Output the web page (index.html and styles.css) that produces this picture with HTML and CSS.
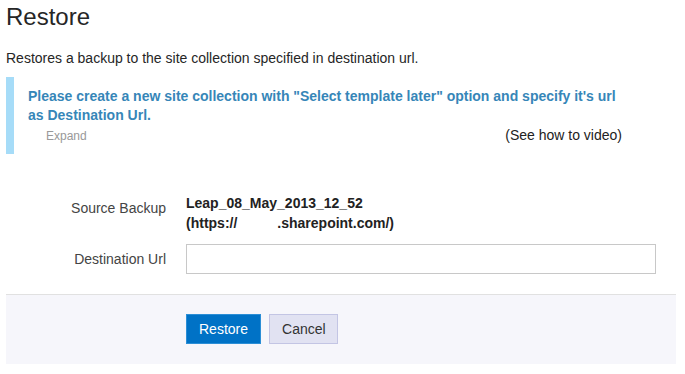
FILE: index.html
```html
<!DOCTYPE html>
<html lang="en">
<head>
  <meta charset="UTF-8" />
  <title>Restore</title>
  <link rel="stylesheet" href="styles.css">
</head>
<body>
  <div class="page">
    <h1>Restore</h1>
    <p class="intro">Restores a backup to the site collection specified in destination url.</p>

    <div class="callout">
      <div class="callout-text">Please create a new site collection with "Select template later" option and specify it's url as Destination Url.</div>
      <div class="callout-row">
        <a class="expand">Expand</a>
        <a class="video">(See how to video)</a>
      </div>
    </div>

    <div class="form-grid">
      <label class="src-label">Source Backup</label>
      <div class="value">Leap_08_May_2013_12_52<br>(https://<span class="blank"></span>.sharepoint.com/)</div>
      <label>Destination Url</label>
      <div><input type="text" id="destUrl" /></div>
    </div>

    <div class="actions">
      <button class="btn btn-primary">Restore</button>
      <button class="btn">Cancel</button>
    </div>
  </div>
</body>
</html>
```

FILE: styles.css
```css
body {
  font-family: 'Liberation Sans', Arial, sans-serif;
  margin: 0;
  background: #fff;
  color: #333;
}
.page {
  width: 670px;
  margin-left: 6px;
}
h1 {
  font-size: 24px;
  font-weight: normal;
  line-height: 28px;
  margin: 3px 0 0 0;
  color: #262626;
}
.intro {
  font-size: 14px;
  line-height: 20px;
  margin: 17px 0 0 0;
  color: #262626;
}
.callout {
  margin-top: 9px;
  border-left: 8px solid #a6dcf8;
  padding: 10px 54px 8px 14px;
}
.callout-text {
  font-size: 14px;
  font-weight: bold;
  line-height: 19px;
  color: #3686b8;
}
.callout-row {
  display: flex;
  justify-content: space-between;
  align-items: baseline;
  font-size: 14px;
  line-height: 20px;
}
.expand {
  font-size: 12px;
  color: #999;
  padding-left: 18px;
}
.video {
  color: #222;
}
.form-grid {
  display: grid;
  grid-template-columns: 160px 470px;
  column-gap: 20px;
  row-gap: 11px;
  margin-top: 39px;
  font-size: 14px;
  line-height: 20px;
}
label {
  text-align: right;
  padding-top: 5px;
  color: #444;
}
.value {
  font-weight: bold;
  color: #222;
}
.blank {
  display: inline-block;
  width: 40px;
}
input {
  box-sizing: border-box;
  width: 470px;
  height: 30px;
  border: 1px solid #c8c8c8;
  margin: 0;
  font-size: 14px;
  display: block;
}
.actions {
  margin-top: 20px;
  border-top: 1px solid #e1e1e1;
  background: #f6f6fb;
  padding: 19px 0 20px 180px;
  display: flex;
  gap: 8px;
}
.btn {
  font-family: 'Liberation Sans', Arial, sans-serif;
  font-size: 14px;
  height: 30px;
  padding: 0 11px 0 12px;
  border: 1px solid #c3c5e4;
  background: #e1e2f2;
  color: #333;
}
.btn-primary {
  background: #0072c6;
  border-color: #2b8ed6;
  color: #fff;
  padding: 0 12px;
}
```
